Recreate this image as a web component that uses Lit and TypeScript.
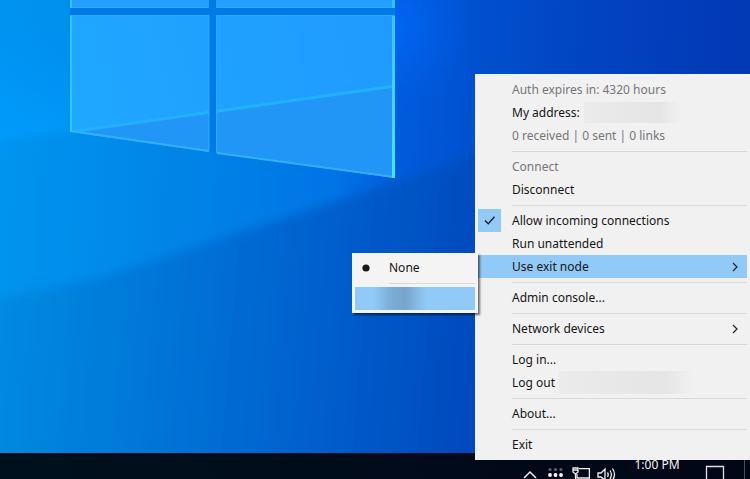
import { LitElement, html, css, svg, nothing } from "lit";
import { customElement } from "lit/decorators.js";

const chevron = html`<svg class="arrow" viewBox="0 0 8 10" aria-hidden="true">
  <path d="M2 1 L6 5 L2 9" fill="none" stroke="#222" stroke-width="1.2" />
</svg>`;

const tick = html`<svg class="mark" viewBox="0 0 23 23" aria-hidden="true">
  <path d="M7 11.5 L10.3 14.8 L16.5 7.8" fill="none" stroke="#1b2530" stroke-width="1.4" />
</svg>`;

const dot = html`<svg class="mark" viewBox="0 0 23 23" aria-hidden="true">
  <circle cx="11" cy="12" r="3.6" fill="#1a1a1a" />
</svg>`;

const menuStyles = css`
  * {
    box-sizing: border-box;
  }
  .item {
    display: grid;
    grid-template-columns: 34px 1fr auto;
    align-items: center;
    width: 100%;
    height: 23px;
    margin: 0;
    padding: 0;
    border: 0;
    background: none;
    color: #151515;
    font: inherit;
    text-align: left;
    white-space: nowrap;
  }
  .item.active {
    background: #91c9f7;
  }
  .item:disabled,
  .item.muted {
    color: #77757a;
  }
  .label {
    grid-column: 2;
    display: flex;
    align-items: center;
    gap: 4px;
  }
  .arrow {
    width: 8px;
    height: 10px;
    margin-right: 8px;
  }
  .check {
    grid-column: 1;
    grid-row: 1;
    appearance: none;
    width: 23px;
    height: 23px;
    margin: 0;
  }
  .check[type="checkbox"]:checked {
    background: #91c9f7;
  }
  .mark {
    grid-column: 1;
    grid-row: 1;
    width: 23px;
    height: 23px;
    pointer-events: none;
  }
  .sep {
    height: 8px;
    margin: 0 0 0 34px;
    border: 0;
    background: linear-gradient(#d9d9d9, #d9d9d9) center / 100% 1px no-repeat;
  }
  .redacted {
    height: 21px;
    background: linear-gradient(90deg, #ebebec, #e5e5e6 80%, #f1f1f1);
  }
`;

@customElement("exit-node-menu")
class ExitNodeMenu extends LitElement {
  static styles = [
    menuStyles,
    css`
      :host {
        box-sizing: border-box;
        display: block;
        width: 126px;
        padding: 3px;
        background: #f4f4f4;
        box-shadow: 2px 2px 2px rgba(0, 0, 0, 0.55);
      }
      .node {
        background: linear-gradient(
          90deg,
          #91c9f7 16%,
          #7eb0d9 28%,
          #76a4ca 42%,
          #8abfeb 54%,
          #91c9f7 60%
        );
      }
    `,
  ];

  render() {
    return html`
      <label class="item">
        <input class="check" type="radio" name="exit-node" checked />
        ${dot}
        <span class="label">None</span>
      </label>
      <hr class="sep" />
      <button class="item node" aria-label="Exit node"></button>
    `;
  }
}

@customElement("tray-menu")
class TrayMenu extends LitElement {
  static styles = [
    menuStyles,
    css`
      :host {
        box-sizing: border-box;
        display: block;
        width: 275px;
        padding: 4px 3px;
        background: #f1f1f1;
        color: #151515;
      }
      .parent {
        position: relative;
      }
      .submenu {
        position: absolute;
        right: 100%;
        top: -2px;
      }
      .address {
        width: 96px;
      }
      .account {
        width: 134px;
        height: 23px;
      }
    `,
  ];

  private action(text: string, extra: unknown = nothing) {
    return html`<button class="item">
      <span class="label">${text}${extra}</span>
    </button>`;
  }

  render() {
    const sep = html`<hr class="sep" />`;
    return html`
      <div class="item muted"><span class="label">Auth expires in: 4320 hours</span></div>
      ${this.action("My address:", html`<span class="redacted address"></span>`)}
      <div class="item muted">
        <span class="label">0 received | 0 sent | 0 links</span>
      </div>
      ${sep}
      <button class="item" disabled><span class="label">Connect</span></button>
      ${this.action("Disconnect")} ${sep}
      <label class="item">
        <input class="check" type="checkbox" checked />
        ${tick}
        <span class="label">Allow incoming connections</span>
      </label>
      <label class="item">
        <input class="check" type="checkbox" />
        <span class="label">Run unattended</span>
      </label>
      <div class="parent">
        <button class="item active" aria-haspopup="true" aria-expanded="true">
          <span class="label">Use exit node</span>${chevron}
        </button>
        <exit-node-menu class="submenu"></exit-node-menu>
      </div>
      ${sep} ${this.action("Admin console...")} ${sep}
      <button class="item" aria-haspopup="true">
        <span class="label">Network devices</span>${chevron}
      </button>
      ${sep} ${this.action("Log in...")}
      ${this.action("Log out", html`<span class="redacted account"></span>`)} ${sep}
      ${this.action("About...")} ${sep} ${this.action("Exit")}
    `;
  }
}

@customElement("task-bar")
class TaskBar extends LitElement {
  static styles = css`
    :host {
      display: flex;
      justify-content: flex-end;
      height: 26px;
      overflow: hidden;
      background: linear-gradient(90deg, #00101c, #010a1a 60%, #020716);
    }
    button {
      display: block;
      margin: 0;
      padding: 0;
      border: 0;
      background: none;
      color: #f2f2f2;
      font: inherit;
    }
    .icon {
      width: 26px;
    }
    .icon svg,
    .notify svg {
      display: block;
      width: 26px;
      height: 26px;
      margin: 0 auto;
    }
    .clock {
      width: 72px;
      height: 23px;
      line-height: 23px;
    }
    .notify {
      width: 43px;
      margin-right: 8px;
    }
    .desktop {
      width: 6px;
      border-left: 1px solid #4a4f5a;
    }
  `;

  render() {
    return html`
      <button class="icon" aria-label="Show hidden icons">
        <svg viewBox="0 0 26 26">
          <path d="M7 25 L13 19 L19 25" fill="none" stroke="#f0f0f0" stroke-width="1.5" />
        </svg>
      </button>
      <button class="icon" aria-label="Tailscale">
        <svg viewBox="0 0 26 26">
          ${[7, 12.5, 18].map(
            (x) => svg`
              <circle cx=${x} cy="16.5" r="1.6" fill="#5a5e68" />
              <circle cx=${x} cy="22" r="1.9" fill="#fff" />`
          )}
        </svg>
      </button>
      <button class="icon" aria-label="Network">
        <svg viewBox="0 0 26 26" fill="none" stroke="#f0f0f0" stroke-width="1.3">
          <path d="M10 15.6 H20.4 V25 H8 V21" />
          <path d="M4 15 H9 V19 L6.5 21 L4 19 Z M4 17 H9 M6.5 21 V26" />
        </svg>
      </button>
      <button class="icon" aria-label="Volume">
        <svg viewBox="0 0 26 26" fill="none" stroke="#f0f0f0" stroke-width="1.3">
          <path d="M3 20 H6 L10 16 V27 L6 24 H3 Z" />
          <path d="M12.5 19.5 Q14 21.5 12.5 24" />
          <path d="M15 17.5 Q17.8 21.5 15 26" />
          <path d="M17.5 15.5 Q21.5 21.5 17.5 27" />
        </svg>
      </button>
      <button class="clock">1:00 PM</button>
      <button class="notify" aria-label="Notifications">
        <svg viewBox="0 0 26 26">
          <path d="M4.5 26 V13.5 H21.5 V26" fill="none" stroke="#dfe0e4" stroke-width="1.3" />
        </svg>
      </button>
      <button class="desktop" aria-label="Show desktop"></button>
    `;
  }
}

@customElement("app-root")
class AppRoot extends LitElement {
  static styles = css`
    :host {
      position: relative;
      display: flex;
      flex-direction: column;
      min-height: 100vh;
      overflow: hidden;
      font: 12px/16px "Noto Sans", "Open Sans", sans-serif;
    }
    .wallpaper {
      flex: 1 1 0;
      min-height: 0;
      width: 100%;
      display: block;
    }
    .menu {
      position: absolute;
      right: 0;
      bottom: 19px;
    }
  `;

  render() {
    return html`
      <svg class="wallpaper" viewBox="0 0 750 453" preserveAspectRatio="xMinYMin slice" aria-hidden="true">
        <defs>
          <linearGradient id="base" gradientUnits="userSpaceOnUse" x1="0" y1="130" x2="750" y2="170">
            <stop offset="0" stop-color="#0095ef" />
            <stop offset="0.25" stop-color="#0084e6" />
            <stop offset="0.45" stop-color="#0074e6" />
            <stop offset="0.53" stop-color="#005cdc" />
            <stop offset="0.65" stop-color="#004ecc" />
            <stop offset="0.8" stop-color="#0242c0" />
            <stop offset="1" stop-color="#0238b4" />
          </linearGradient>
          <radialGradient id="glow" gradientUnits="userSpaceOnUse" cx="395" cy="30" r="75">
            <stop offset="0" stop-color="#0068f8" stop-opacity="0.8" />
            <stop offset="1" stop-color="#0060f0" stop-opacity="0" />
          </radialGradient>
          <linearGradient id="ray" gradientUnits="userSpaceOnUse" x1="0" y1="0" x2="0" y2="145">
            <stop offset="0" stop-color="#0090f4" stop-opacity="0.2" />
            <stop offset="1" stop-color="#009eff" stop-opacity="0.9" />
          </linearGradient>
          <linearGradient id="rayFade" x1="0" y1="0" x2="1" y2="0">
            <stop offset="0" stop-color="#fff" />
            <stop offset="1" stop-color="#333" />
          </linearGradient>
          <mask id="rayMask" maskUnits="userSpaceOnUse" x="-20" y="-20" width="260" height="200">
            <rect x="-20" y="-20" width="240" height="180" fill="url(#rayFade)" />
          </mask>
          <linearGradient id="floor" gradientUnits="userSpaceOnUse" x1="0" y1="330" x2="470" y2="370">
            <stop offset="0" stop-color="#008ae0" />
            <stop offset="0.36" stop-color="#0074d8" />
            <stop offset="0.68" stop-color="#005fcc" />
            <stop offset="1" stop-color="#004abe" />
          </linearGradient>
          <linearGradient id="pane" gradientUnits="userSpaceOnUse" x1="70" y1="130" x2="395" y2="40">
            <stop offset="0" stop-color="#1fa8ff" />
            <stop offset="1" stop-color="#209aff" />
          </linearGradient>
          <linearGradient id="edge" gradientUnits="userSpaceOnUse" x1="0" y1="0" x2="0" y2="178">
            <stop offset="0" stop-color="#38c0ff" />
            <stop offset="1" stop-color="#45e6ff" />
          </linearGradient>
          <filter id="soft" x="-20%" y="-20%" width="140%" height="140%">
            <feGaussianBlur stdDeviation="5" />
          </filter>
          <filter id="rim" x="-20%" y="-20%" width="140%" height="140%">
            <feGaussianBlur stdDeviation="3" />
          </filter>
          <clipPath id="panes">
            <path d="M70 15 H209 V152 L70 132 Z M216 15 H395 V178 L216 153 Z" />
          </clipPath>
        </defs>
        <rect width="750" height="453" fill="url(#base)" />
        <rect x="280" y="0" width="240" height="160" fill="url(#glow)" />
        <g mask="url(#rayMask)">
          <path d="M-20 -10 H220 V116 L70 132 L-20 143 Z" fill="url(#ray)" filter="url(#rim)" />
        </g>
        <path
          d="M395 182 L300 213 L200 245 L100 278 L-20 302 V480 H520 V140 Z"
          fill="url(#floor)"
          filter="url(#soft)"
        />
        <path d="M70 0 H395 V178 L70 132 Z" fill="#007ae6" />
        <path d="M70 0 H209 V8 H70 Z M216 0 H395 V8 H216 Z" fill="#249eff" />
        <g clip-path="url(#panes)">
          <rect x="60" y="10" width="345" height="175" fill="url(#pane)" />
          <path d="M70 132 L395 86 V180 Z" fill="#2196f6" />
          <path d="M70 132 L395 86" stroke="#22b0ff" stroke-width="3" />
        </g>
        <g fill="none" stroke-width="1" stroke="#30a8ff">
          <path d="M70 7.5 H209 M216 7.5 H395 M70 15.5 H209 V150 M395 15.5 H216.5 V153" />
        </g>
        <path d="M71 131 L209 151 M217 153 L394 177" fill="none" stroke="#32b0ff" stroke-width="2" />
        <path d="M71 0 V8 M71 16 V132" fill="none" stroke="#30c8ff" stroke-width="2" />
        <path d="M393.5 0 V8 M393.5 16 V178" fill="none" stroke="url(#edge)" stroke-width="3" />
      </svg>
      <task-bar></task-bar>
      <tray-menu class="menu"></tray-menu>
    `;
  }
}
